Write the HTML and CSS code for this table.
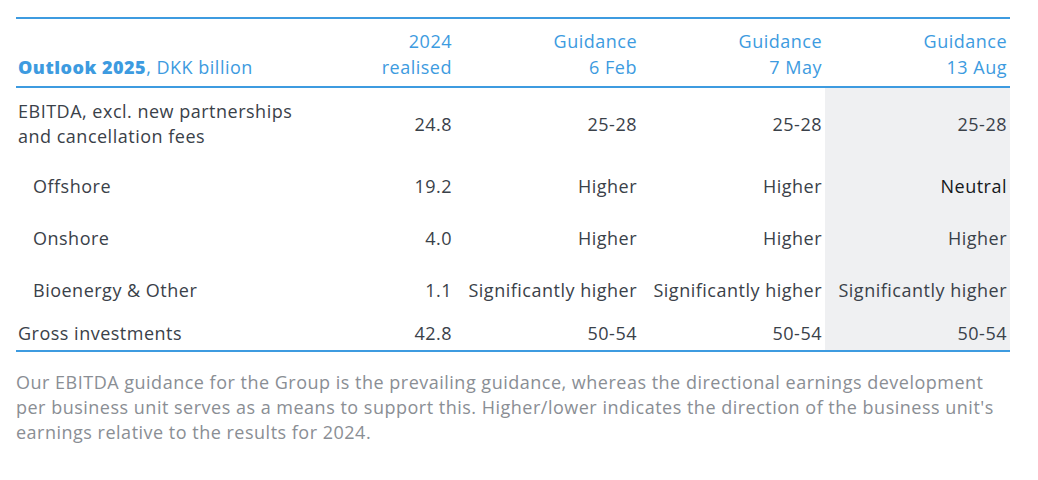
FILE: index.html
```html
<!DOCTYPE html>
<html lang="en">
<head>
<meta charset="utf-8">
<title>Outlook 2025</title>
<link rel="stylesheet" href="styles.css">
</head>
<body>
<div class="page">
  <table class="outlook">
    <colgroup>
      <col class="c-label">
      <col class="c-num">
      <col class="c-g">
      <col class="c-g">
      <col class="c-g">
    </colgroup>
    <thead>
      <tr>
        <th class="label"><strong>Outlook 2025</strong>, DKK billion</th>
        <th>2024<br>realised</th>
        <th>Guidance<br>6 Feb</th>
        <th>Guidance<br>7 May</th>
        <th>Guidance<br>13 Aug</th>
      </tr>
    </thead>
    <tbody>
      <tr class="main tall">
        <td class="label">EBITDA, excl. new partnerships and cancellation fees</td>
        <td>24.8</td>
        <td>25-28</td>
        <td>25-28</td>
        <td class="hl">25-28</td>
      </tr>
      <tr class="sub">
        <td class="label">Offshore</td>
        <td>19.2</td>
        <td>Higher</td>
        <td>Higher</td>
        <td class="hl strong">Neutral</td>
      </tr>
      <tr class="sub">
        <td class="label">Onshore</td>
        <td>4.0</td>
        <td>Higher</td>
        <td>Higher</td>
        <td class="hl">Higher</td>
      </tr>
      <tr class="sub">
        <td class="label">Bioenergy &amp; Other</td>
        <td>1.1</td>
        <td>Significantly higher</td>
        <td>Significantly higher</td>
        <td class="hl">Significantly higher</td>
      </tr>
      <tr class="main last">
        <td class="label">Gross investments</td>
        <td>42.8</td>
        <td>50-54</td>
        <td>50-54</td>
        <td class="hl">50-54</td>
      </tr>
    </tbody>
  </table>
  <p class="note">Our EBITDA guidance for the Group is the prevailing guidance, whereas the directional earnings development per business unit serves as a means to support this. Higher/lower indicates the direction of the business unit's earnings relative to the results for 2024.</p>
</div>
</body>
</html>
```

FILE: styles.css
```css
html, body {
  margin: 0;
  padding: 0;
  background: #ffffff;
}

.page {
  padding: 17px 28px 0 16px;
  font-family: "Open Sans", "Noto Sans", sans-serif;
}

.outlook {
  width: 994px;
  border-collapse: collapse;
  table-layout: fixed;
  border-top: 2px solid #3d9be0;
  border-bottom: 2px solid #3d9be0;
  font-size: 18px;
  letter-spacing: 0.5px;
  color: #3a4149;
}

.c-label { width: 290px; }
.c-num { width: 149px; }
.c-g { width: 185px; }

.outlook th,
.outlook td {
  padding: 0 3px 0 0;
  text-align: right;
  vertical-align: middle;
  white-space: nowrap;
}

.outlook thead th {
  font-weight: normal;
  color: #3d9be0;
  line-height: 26px;
  height: 61px;
  vertical-align: bottom;
  padding-bottom: 6px;
  border-bottom: 2px solid #3d9be0;
}

.outlook thead th.label strong {
  font-weight: 800;
}

.outlook .label {
  text-align: left;
  padding-left: 2px;
  white-space: normal;
}

.outlook tr.tall td {
  height: 72px;
  line-height: 25px;
}

.outlook tr.sub td {
  height: 52px;
}

.outlook tr.sub td.label {
  padding-left: 17px;
}

.outlook tr.last td {
  height: 34px;
}

.outlook td.hl {
  background: #eff0f2;
}

.outlook td.strong {
  color: #15181b;
}

.note {
  margin: 18px 0 0 0;
  font-size: 18px;
  letter-spacing: 0.5px;
  line-height: 25px;
  color: #8a8e94;
  width: 990px;
}
```
